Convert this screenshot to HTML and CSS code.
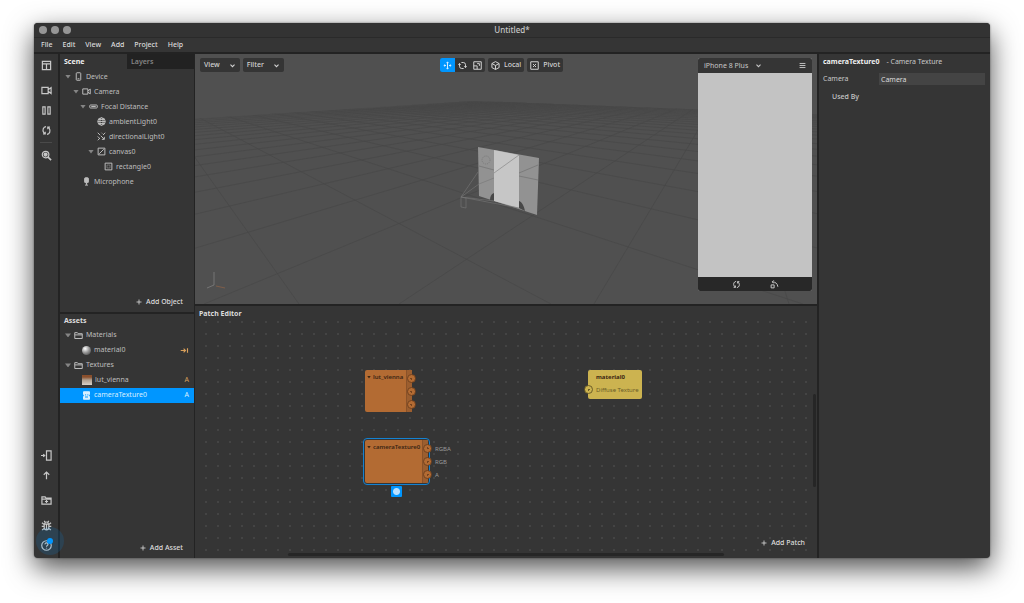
FILE: index.html
```html
<!DOCTYPE html>
<html lang="en">
<head>
    <meta charset="UTF-8">
    <meta name="viewport" content="width=device-width, initial-scale=1.0">
    <title>Untitled*</title>
    <link rel="stylesheet" href="styles.css">
</head>
<body>
    <!-- Icon set -->
    <svg class="icon-set" aria-hidden="true">
        <symbol id="i-layout" viewBox="0 0 12 12"><path d="M1.5 1.5h9v9h-9zM1.5 4.2h9M6 4.2v6.3"/></symbol>
        <symbol id="i-video" viewBox="0 0 12 12"><path d="M1 2.5h6.8v7H1zM7.8 5.2 11 2.8v6.4L7.8 6.8"/></symbol>
        <symbol id="i-pause" viewBox="0 0 12 12"><path d="M2 2h2.5v8H2zM7.5 2H10v8H7.5z"/></symbol>
        <symbol id="i-refresh" viewBox="0 0 12 12"><path d="M5.5 1.8C2.5 2.2 1.2 5.5 3 8.4l1.4 1.4M4.6 7.4v2.4H2.2M6.5 10.2c3-.4 4.3-3.7 2.5-6.6L7.6 2.2M7.4 4.6V2.2h2.4"/></symbol>
        <symbol id="i-search" viewBox="0 0 12 12"><circle cx="5" cy="5" r="3.6"/><circle cx="5" cy="5" r="1.6" fill="currentColor"/><path d="m7.7 7.7 3.3 3.3" stroke-width="1.8"/></symbol>
        <symbol id="i-send" viewBox="0 0 12 12"><path d="M6 1h5v10H6zM0 6h4M2.4 4.6 4 6 2.4 7.4"/></symbol>
        <symbol id="i-up" viewBox="0 0 12 12"><path d="M6 10V2.5M3 5.2l3-3 3 3"/></symbol>
        <symbol id="i-import" viewBox="0 0 12 12"><path d="M1 10V2h3.5l1 1.5H11V10zM1 4.5h10M6 5.4v3.4M4.3 7.1h3.4"/></symbol>
        <symbol id="i-bug" viewBox="0 0 12 12"><path d="M3.5 4.5h5v3.8a2.5 2.5 0 0 1-5 0zM4 4.2a2 2 0 0 1 4 0M6 4.5v6M1 3l2.5 2M11 3 8.5 5M.8 7h2.6M8.6 7h2.6M1.2 10.8 3.7 9M10.8 10.8 8.3 9M3.5 1l1 1.5M8.5 1l-1 1.5"/></symbol>
        <symbol id="i-help" viewBox="0 0 12 12"><circle cx="6" cy="6" r="5.2"/><path d="M4.4 4.8A1.6 1.6 0 1 1 6.8 6.100c-.6.3-.8.6-.8 1.2M6 8.4v.9"/></symbol>
        <symbol id="i-device" viewBox="0 0 12 12"><rect x="3" y="1" width="6" height="10" rx="1"/><path d="M4.8 9h2.4"/></symbol>
        <symbol id="i-focal" viewBox="0 0 12 12"><rect x="1" y="4" width="10" height="4" rx="1"/><path d="M3 6h6"/></symbol>
        <symbol id="i-ambient" viewBox="0 0 12 12"><circle cx="6" cy="6" r="5"/><ellipse cx="6" cy="6" rx="2.2" ry="5"/><path d="M1 6h10M2 3.3h8M2 8.7h8"/></symbol>
        <symbol id="i-directional" viewBox="0 0 12 12"><path d="m1 1 3 3M1 6l2 2M5 5l4.5 4.5M9.8 6.5v3.3H6.5M11 1 8 4M1 11l3-3M6 1l1 1"/></symbol>
        <symbol id="i-canvas" viewBox="0 0 12 12"><path d="M1.5 1.5h9v9h-9zM3 9l6-6"/></symbol>
        <symbol id="i-rect" viewBox="0 0 12 12"><path d="M1.5 1.5h9v9h-9z"/><path d="M4 4h4v4H4z" opacity=".4"/></symbol>
        <symbol id="i-mic" viewBox="0 0 12 12"><rect x="3.5" y="1" width="5" height="6.5" rx="1" fill="currentColor"/><path d="M6 7.5v3M4 10.8h4"/></symbol>
        <symbol id="i-folder" viewBox="0 0 12 12"><path d="M1 10V2.2h3.5l1 1.4H11V10zM1 5.2h10"/></symbol>
        <symbol id="i-chevron" viewBox="0 0 12 12"><path d="M2.5 4.500 6 8l3.500-3.500" stroke-width="1.8"/></symbol>
        <symbol id="i-move" viewBox="0 0 12 12"><path d="M6 1v10M1 6h3M8 6h3M4.600 2.200h2.800M4.600 9.800h2.800M2.200 4.600v2.800M9.800 4.600v2.800"/></symbol>
        <symbol id="i-rotate" viewBox="0 0 12 12"><path d="M4.500 2H7a3 3 0 0 1 3 3v3.500M8.300 7 10 8.800 11.700 7M7.500 10H5a3 3 0 0 1-3-3V3.500M.3 5 2 3.200 3.700 5"/></symbol>
        <symbol id="i-scale" viewBox="0 0 12 12"><path d="M1 1h10v10H1zM1 6.500h4.500V11M5.500 3.500h3v3"/></symbol>
        <symbol id="i-cube" viewBox="0 0 12 12"><path d="m6 .8 4.800 2.600v5.400L6 11.300 1.200 8.800V3.400zM1.200 3.400 6 6l4.800-2.600M6 6v5.300"/></symbol>
        <symbol id="i-pivot" viewBox="0 0 12 12"><path d="M1 1h10v10H1zM4 4l4 4M8 4 4 8"/></symbol>
        <symbol id="i-menu" viewBox="0 0 12 12"><path d="M1 2.500h10M1 6h10M1 9.500h10" stroke-width="1.6"/></symbol>
        <symbol id="i-orient" viewBox="0 0 12 12"><path d="M1.500 6.500h4v4h-4zM3 2.500c4 0 7 2 7.500 6.500M5 .5l-2 2 2 2"/></symbol>
        <symbol id="i-plus" viewBox="0 0 12 12"><path d="M6 1v10M1 6h10" stroke-width="1.6"/></symbol>
        <symbol id="i-camtex" viewBox="0 0 12 12"><path d="M2 1h8v3l-1 2 1 2v3H2V8l1-2-1-2z" fill="currentColor"/><path d="M4 5.200h1.500M7 5.200h1.500M4 8h4" stroke="#0096ff"/></symbol>
        <symbol id="i-link" viewBox="0 0 12 12"><path d="M1 6h6M4.800 3.500 7.300 6 4.800 8.500M10 3v6" stroke-width="1.5"/></symbol>
    </svg>

    <div class="window">
        <header class="titlebar">
            <div class="lights"><span></span><span></span><span></span></div>
            <h1>Untitled*</h1>
        </header>
        <nav class="menubar">
            <a href="#">File</a>
            <a href="#">Edit</a>
            <a href="#">View</a>
            <a href="#">Add</a>
            <a href="#">Project</a>
            <a href="#">Help</a>
        </nav>

        <div class="workspace">
            <aside class="rail">
                <button aria-label="Workspace"><svg class="icon"><use href="#i-layout"/></svg></button>
                <div class="rail-group">
                    <button aria-label="Video"><svg class="icon"><use href="#i-video"/></svg></button>
                    <button aria-label="Pause"><svg class="icon"><use href="#i-pause"/></svg></button>
                    <button aria-label="Restart"><svg class="icon"><use href="#i-refresh"/></svg></button>
                </div>
                <button class="rail-search" aria-label="Search"><svg class="icon"><use href="#i-search"/></svg></button>
                <div class="rail-bottom">
                    <button aria-label="Send to device"><svg class="icon"><use href="#i-send"/></svg></button>
                    <button aria-label="Export"><svg class="icon"><use href="#i-up"/></svg></button>
                    <button class="spaced" aria-label="Import"><svg class="icon"><use href="#i-import"/></svg></button>
                    <button class="spaced" aria-label="Report a bug"><svg class="icon"><use href="#i-bug"/></svg></button>
                    <button class="help" aria-label="Help"><svg class="icon"><use href="#i-help"/></svg></button>
                </div>
            </aside>

            <div class="left-panel">
                <section class="scene">
                    <div class="tabs">
                        <button class="tab active">Scene</button>
                        <button class="tab">Layers</button>
                    </div>
                    <ul class="tree">
                        <li class="d0"><i class="arrow"></i><svg class="icon"><use href="#i-device"/></svg>Device</li>
                        <li class="d1"><i class="arrow"></i><svg class="icon"><use href="#i-video"/></svg>Camera</li>
                        <li class="d2"><i class="arrow"></i><svg class="icon"><use href="#i-focal"/></svg>Focal Distance</li>
                        <li class="d3 leaf"><i class="arrow"></i><svg class="icon"><use href="#i-ambient"/></svg>ambientLight0</li>
                        <li class="d3 leaf"><i class="arrow"></i><svg class="icon"><use href="#i-directional"/></svg>directionalLight0</li>
                        <li class="d3"><i class="arrow"></i><svg class="icon"><use href="#i-canvas"/></svg>canvas0</li>
                        <li class="d4 leaf"><i class="arrow"></i><svg class="icon"><use href="#i-rect"/></svg>rectangle0</li>
                        <li class="d1 leaf"><i class="arrow"></i><svg class="icon"><use href="#i-mic"/></svg>Microphone</li>
                    </ul>
                    <button class="add"><svg class="icon"><use href="#i-plus"/></svg>Add Object</button>
                </section>
                <section class="assets">
                    <h2>Assets</h2>
                    <ul class="tree">
                        <li class="d0"><i class="arrow"></i><svg class="icon"><use href="#i-folder"/></svg>Materials</li>
                        <li class="d1 leaf"><i class="arrow"></i><span class="ball"></span>material0<svg class="icon mark"><use href="#i-link"/></svg></li>
                        <li class="d0"><i class="arrow"></i><svg class="icon"><use href="#i-folder"/></svg>Textures</li>
                        <li class="d1 leaf"><i class="arrow"></i><span class="thumb"></span>lut_vienna<span class="mark">A</span></li>
                        <li class="d1 leaf selected"><i class="arrow"></i><svg class="icon"><use href="#i-camtex"/></svg>cameraTexture0<span class="mark">A</span></li>
                    </ul>
                    <button class="add"><svg class="icon"><use href="#i-plus"/></svg>Add Asset</button>
                </section>
            </div>

            <main class="center">
                <section class="viewport">
                    <svg class="stage" viewBox="0 0 622 250" preserveAspectRatio="xMidYMid slice">
                        <clipPath id="ground"><path d="M-50 68 280 47 800 67V260H-50z"/></clipPath>
                        <g id="grid" clip-path="url(#ground)"></g>
                        <path class="plane" d="m283 93 61 11-2 57-58-19z"/>
                        <path class="plane-lit" d="m299 96 25 5v53l-25-7z"/>
                        <path class="hole" d="M299 147v-8c-3 1-4 4-4 7zM324 154v-7c3 1 5 5 6 10z"/>
                        <path class="wire" d="m299 119 25-18M324 119l19-8M324 122l19 4M284 112l15 4"/>
                        <circle class="wire" cx="291" cy="106" r="4" stroke-dasharray="1 1"/>
                        <path class="frustum" d="m266 143 17-25M266 143l18-13 15-6M266 143l58 11M266 143l33 4M266 143v10l5 1v-10z"/>
                        <path class="axis" d="M19 218v13l-7 3"/>
                        <path class="axis-x" d="m21 232 9 2"/>
                    </svg>
                    <div class="toolbar">
                        <div class="tools">
                            <button class="tool drop">View<svg class="icon"><use href="#i-chevron"/></svg></button>
                            <button class="tool drop">Filter<svg class="icon"><use href="#i-chevron"/></svg></button>
                        </div>
                        <div class="tools">
                            <div class="segments">
                                <button class="on" aria-label="Move"><svg class="icon"><use href="#i-move"/></svg></button>
                                <button aria-label="Rotate"><svg class="icon"><use href="#i-rotate"/></svg></button>
                                <button aria-label="Scale"><svg class="icon"><use href="#i-scale"/></svg></button>
                            </div>
                            <button class="tool"><svg class="icon"><use href="#i-cube"/></svg>Local</button>
                            <button class="tool"><svg class="icon"><use href="#i-pivot"/></svg>Pivot</button>
                        </div>
                    </div>
                    <div class="simulator">
                        <div class="sim-head">
                            <button>iPhone 8 Plus<svg class="icon"><use href="#i-chevron"/></svg></button>
                            <button aria-label="Menu"><svg class="icon"><use href="#i-menu"/></svg></button>
                        </div>
                        <div class="sim-screen"></div>
                        <div class="sim-foot">
                            <button aria-label="Flip"><svg class="icon"><use href="#i-refresh"/></svg></button>
                            <button aria-label="Rotate device"><svg class="icon"><use href="#i-orient"/></svg></button>
                        </div>
                    </div>
                </section>

                <section class="patch-editor">
                    <h2>Patch Editor</h2>
                    <div class="canvas">
                        <div class="patch orange lut">
                            <span class="patch-name"><i class="arrow"></i>lut_vienna</span>
                            <div class="ports">
                                <span class="port"></span>
                                <span class="port"></span>
                                <span class="port"></span>
                            </div>
                        </div>
                        <div class="patch orange camera">
                            <span class="patch-name"><i class="arrow"></i>cameraTexture0</span>
                            <div class="ports">
                                <span class="port"><b>RGBA</b></span>
                                <span class="port"><b>RGB</b></span>
                                <span class="port"><b>A</b></span>
                            </div>
                            <button class="patch-action" aria-label="Change patch"></button>
                        </div>
                        <div class="patch yellow material">
                            <strong>material0</strong>
                            <span>Diffuse Texture</span>
                            <i class="port"></i>
                        </div>
                    </div>
                    <div class="scroll-x"></div>
                    <div class="scroll-y"></div>
                    <button class="add"><svg class="icon"><use href="#i-plus"/></svg>Add Patch</button>
                </section>
            </main>

            <aside class="inspector">
                <p class="subject"><strong>cameraTexture0</strong><span>- Camera Texture</span></p>
                <div class="field">
                    <label for="camera">Camera</label>
                    <input id="camera" type="text" value="Camera">
                </div>
                <h3>Used By</h3>
            </aside>
        </div>
    </div>

    <script>
        // Floor grid: two families of parallel lines, each meeting at its own point on the horizon
        const grid = document.getElementById('grid');
        const bottom = 250;

        function addLines(vanishX, startX, step, count) {
            for (let i = 0; i < count; i++) {
                const line = document.createElementNS('http://www.w3.org/2000/svg', 'line');
                line.setAttribute('x1', vanishX);
                line.setAttribute('y1', 36);
                line.setAttribute('x2', startX + step * i);
                line.setAttribute('y2', bottom);
                grid.appendChild(line);
            }
        }

        addLines(-48, -148, 252, 26);
        addLines(527, 594, -195, 22);
    </script>
</body>
</html>
```
FILE: styles.css
```css
:root {
    --panel: #353535;
    --line: #232323;
    --text: #c8c8c8;
    --blue: #0096ff;
    --orange: #b36b33;
    --yellow: #ccb350;
}

* {
    margin: 0;
    padding: 0;
    box-sizing: border-box;
}

body {
    min-height: 100vh;
    display: flex;
    padding: 23px 34px 45px;
    background: #fff;
    color: var(--text);
    font-family: "Noto Sans", "Open Sans", sans-serif;
    font-size: 7px;
    line-height: 10px;
}

button, input {
    border: 0;
    background: none;
    color: inherit;
    font: inherit;
}

button {
    display: flex;
    align-items: center;
    justify-content: center;
}

a {
    color: inherit;
    text-decoration: none;
}

ul {
    list-style: none;
}

h1, h2, h3 {
    font-size: 7px;
    font-weight: 500;
}

h2 {
    height: 14px;
    padding: 2px 4px;
    font-weight: 700;
    color: #dcdcdc;
}

.icon-set {
    position: absolute;
    width: 0;
    height: 0;
}

.icon {
    width: 9px;
    height: 9px;
    flex: none;
    fill: none;
    stroke: currentColor;
    stroke-width: 1.3;
}

.window {
    flex: 1;
    display: flex;
    flex-direction: column;
    border-radius: 4px;
    background: var(--panel);
    box-shadow: 0 0 2px rgba(0,0,0,0.5), 0 10px 28px rgba(0,0,0,0.7);
    overflow: hidden;
}

/* Title and menus */
.titlebar {
    display: grid;
    grid-template-columns: 1fr auto 1fr;
    align-items: center;
    height: 15px;
    padding: 0 5px;
    border-bottom: 1px solid #2a2a2a;
    background: #333;
}

.titlebar h1 {
    font-size: 8px;
}

.lights {
    display: flex;
    gap: 4px;
}

.lights span {
    width: 8px;
    height: 8px;
    border-radius: 50%;
    background: #969696;
}

.menubar {
    display: flex;
    align-items: center;
    gap: 10px;
    height: 16px;
    padding: 0 7px 1px;
    border-bottom: 2px solid var(--line);
    color: #dcdcdc;
    font-weight: 500;
}

.workspace {
    flex: 1;
    display: flex;
}

/* Icon rail */
.rail {
    width: 26px;
    display: flex;
    flex-direction: column;
    align-items: center;
    padding: 3px 0 5px;
    border-right: 2px solid var(--line);
}

.rail .icon {
    width: 11px;
    height: 11px;
}

.rail button {
    width: 20px;
    height: 16px;
}

.rail-group {
    display: flex;
    flex-direction: column;
    align-items: center;
    gap: 4px;
    margin-top: 9px;
    padding-bottom: 4px;
    border-bottom: 1px solid #4a4a4a;
}

.rail-group button {
    width: 12px;
}

.rail-search {
    margin-top: 4px;
}

.rail-bottom {
    margin-top: auto;
    display: flex;
    flex-direction: column;
    gap: 4px;
}

.rail-bottom .spaced {
    margin-top: 5px;
}

.rail-bottom .help {
    position: relative;
}

.help::before {
    content: "";
    position: absolute;
    top: -10px;
    left: 0;
    width: 28px;
    height: 28px;
    border-radius: 50%;
    background: rgba(0,150,255,0.14);
}

.help::after {
    content: "";
    position: absolute;
    top: 1px;
    left: 11px;
    width: 6px;
    height: 6px;
    border-radius: 50%;
    background: var(--blue);
}

/* Scene and assets */
.left-panel {
    width: 135px;
    display: flex;
    flex-direction: column;
    border-right: 1px solid var(--line);
}

.scene, .assets {
    display: flex;
    flex-direction: column;
}

.scene {
    flex: 259 1 0;
    border-bottom: 2px solid var(--line);
}

.assets {
    flex: 245 1 0;
}

.tabs {
    display: flex;
    height: 15px;
}

.tab {
    flex: 1;
    justify-content: flex-start;
    padding: 0 4px;
    background: #222;
    color: #858585;
    font-weight: 600;
}

.tab.active {
    background: none;
    color: #f0f0f0;
    font-weight: 700;
}

.tree li {
    display: flex;
    align-items: center;
    gap: 3px;
    height: 15px;
    padding-right: 5px;
    color: #bebebe;
}

.tree .d0 { padding-left: 5px; }
.tree .d1 { padding-left: 13px; }
.tree .d2 { padding-left: 20px; }
.tree .d3 { padding-left: 28px; }
.tree .d4 { padding-left: 35px; }

.arrow {
    width: 6px;
    height: 4px;
    flex: none;
    background: #858585;
    clip-path: polygon(0 0, 100% 0, 50% 100%);
}

.leaf .arrow {
    visibility: hidden;
}

.ball {
    width: 9px;
    height: 9px;
    border-radius: 50%;
    background: radial-gradient(circle at 35% 30%, #fff, #999 45%, #333);
}

.thumb {
    width: 10px;
    height: 10px;
    background: linear-gradient(#8a4f2c 20%, #b0a090 50%, #d8d0c8);
}

.tree .mark {
    margin-left: auto;
    color: #d9a05b;
}

.tree .selected, .tree .selected .mark {
    background: var(--blue);
    color: #d8efff;
}

.add {
    align-self: flex-end;
    gap: 4px;
    margin: auto 11px 5px 0;
    color: #dcdcdc;
    font-weight: 500;
}

.add .icon {
    width: 6px;
    height: 6px;
}

/* Viewport */
.center {
    flex: 1;
    min-width: 0;
    display: flex;
    flex-direction: column;
}

.viewport {
    position: relative;
    flex: 251 1 0;
    background: #505050;
    overflow: hidden;
}

.stage {
    position: absolute;
    width: 100%;
    height: 100%;
    fill: none;
}

#grid line {
    stroke: #484848;
    stroke-width: 0.7;
}

.plane { fill: #929292; }
.plane-lit { fill: #c6c6c6; }
.hole { fill: #484848; }
.wire { stroke: rgba(90,90,90,0.5); stroke-width: 0.8; }
.frustum { stroke: #777; stroke-width: 0.6; }
.axis { stroke: #848484; stroke-width: 0.7; }
.axis-x { stroke: #8a6148; stroke-width: 0.8; }

.toolbar {
    position: relative;
    display: grid;
    grid-template-columns: 1fr auto 1fr;
    padding: 4px 14px 0 5px;
    color: #d4d4d4;
    font-weight: 500;
}

.tools {
    display: flex;
    gap: 3px;
}

.tool, .segments {
    height: 14px;
    border-radius: 2px;
    background: var(--panel);
}

.tool {
    gap: 4px;
    padding: 0 3px;
}

.drop {
    gap: 9px;
    padding: 0 4px;
}

.drop .icon, .sim-head .icon {
    width: 7px;
    height: 7px;
}

.segments {
    display: flex;
    overflow: hidden;
}

.segments button {
    width: 15px;
    height: 14px;
}

.segments .on {
    background: var(--blue);
    color: #d8efff;
}

.simulator {
    position: absolute;
    top: 4px;
    right: 5px;
    bottom: 13px;
    width: 114px;
    display: flex;
    flex-direction: column;
    border-radius: 2px;
    background: #c3c3c3;
    overflow: hidden;
}

.sim-head {
    display: flex;
    justify-content: space-between;
    height: 15px;
    padding: 0 6px;
    background: var(--panel);
}

.sim-head button {
    gap: 7px;
}

.sim-screen {
    flex: 1;
}

.sim-foot {
    display: flex;
    justify-content: center;
    gap: 29px;
    height: 14px;
    background: #282828;
}

/* Patch editor */
.patch-editor {
    position: relative;
    flex: 253 1 0;
    display: flex;
    flex-direction: column;
    border-top: 2px solid var(--line);
}

.patch-editor h2 {
    padding: 3px 4px;
}

.canvas {
    position: relative;
    flex: 1;
    background: radial-gradient(circle, #444 1px, transparent 1px) 5px 8px / 12px 12px;
}

.patch {
    position: absolute;
    border-radius: 2px;
    color: #3a2513;
    font-size: 6px;
    line-height: 8px;
}

.orange {
    background: var(--orange);
}

.lut {
    top: 50px;
    left: 170px;
    width: 47px;
    height: 42px;
}

.camera {
    top: 120px;
    left: 170px;
    width: 63px;
    height: 43px;
    outline: 1px solid #1482d2;
    outline-offset: 1px;
}

.patch-name {
    display: flex;
    align-items: center;
    gap: 2px;
    padding: 3px 2px;
    font-weight: 600;
}

.patch .arrow {
    width: 4px;
    height: 3px;
    background: #3a2513;
}

.ports {
    position: absolute;
    top: 0;
    right: 0;
    bottom: 0;
    width: 6px;
    display: flex;
    flex-direction: column;
    gap: 4px;
    padding-top: 4px;
    border-left: 1px solid #8a5229;
    background: #9c5e2f;
}

.port {
    display: flex;
    align-items: center;
    width: 9px;
    height: 9px;
    flex: none;
    border: 1px solid #74431f;
    border-radius: 50%;
    background: radial-gradient(circle, #74431f 1px, var(--orange) 1px);
}

.port b {
    margin-left: 11px;
    color: #999;
    font-weight: 400;
}

.patch-action {
    position: absolute;
    top: 46px;
    left: 26px;
    width: 11px;
    height: 11px;
    border-radius: 1px;
    background: radial-gradient(circle, #b8e0ff 3px, var(--blue) 4px);
}

.material {
    top: 50px;
    left: 393px;
    width: 54px;
    height: 29px;
    display: flex;
    flex-direction: column;
    gap: 5px;
    padding: 3px 0 0 8px;
    background: var(--yellow);
    white-space: nowrap;
}

.material span {
    color: #6b5d28;
}

.material .port {
    position: absolute;
    top: 15px;
    left: -4px;
    border-color: #6b5d28;
    background: radial-gradient(circle, #6b5d28 1px, var(--yellow) 1px);
}

.scroll-x, .scroll-y {
    position: absolute;
    border-radius: 2px;
    background: #262626;
}

.scroll-x {
    left: 15%;
    right: 15%;
    bottom: 2px;
    height: 3px;
}

.scroll-y {
    top: 35%;
    right: 1px;
    bottom: 28%;
    width: 3px;
}

.patch-editor .add {
    position: absolute;
    right: 12px;
    bottom: 10px;
    margin: 0;
}

/* Inspector */
.inspector {
    width: 173px;
    padding: 3px 5px 3px 4px;
    border-left: 2px solid var(--line);
}

.subject {
    display: flex;
    gap: 7px;
}

.subject strong {
    color: #f0f0f0;
}

.field {
    display: flex;
    align-items: center;
    margin-top: 6px;
}

.field label {
    flex: 1;
}

.field input {
    width: 106px;
    height: 12px;
    padding: 0 2px;
    background: #444;
    color: #dcdcdc;
}

.inspector h3 {
    margin: 7px 9px;
}
```
